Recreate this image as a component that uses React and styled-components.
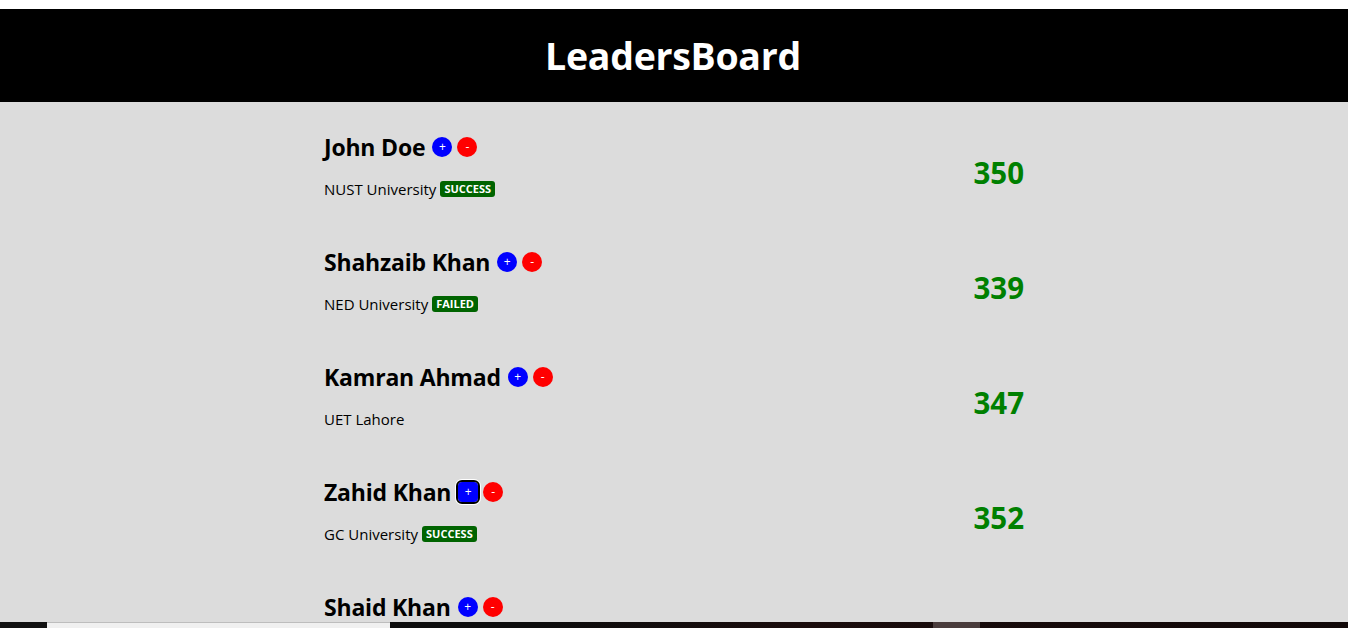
import React from 'react';
import styled, { createGlobalStyle } from 'styled-components';

// leaders data
const leaders = [
  { id: 1, name: 'John Doe', uni: 'NUST University', status: 'SUCCESS', score: 350 },
  { id: 2, name: 'Shahzaib Khan', uni: 'NED University', status: 'FAILED', score: 339 },
  { id: 3, name: 'Kamran Ahmad', uni: 'UET Lahore', status: null, score: 347 },
  { id: 4, name: 'Zahid Khan', uni: 'GC University', status: 'SUCCESS', score: 352, focused: true },
  { id: 5, name: 'Shaid Khan', uni: 'FAST University', status: null, score: 341 },
];

const fontStack = '"Segoe UI", "Open Sans", "Noto Sans", sans-serif';

const GlobalStyle = createGlobalStyle`
  html, body {
    margin: 0;
    padding: 0;
    height: 100%;
    overflow: hidden;
    background: #dcdcdc;
    font-family: ${fontStack};
  }
`;

const Page = styled.div`
  height: 628px;
  display: flex;
  flex-direction: column;
  background: #dcdcdc;
  overflow: hidden;
`;

const TopGap = styled.div`
  height: 9px;
  background: #fff;
  flex-shrink: 0;
`;

const Header = styled.header`
  height: 93px;
  background: #000;
  display: flex;
  align-items: center;
  justify-content: center;
  flex-shrink: 0;

  h1 {
    margin: 0 0 0 -2px;
    color: #fff;
    font-size: 37.5px;
    font-weight: 700;
    letter-spacing: -0.3px;
  }
`;

// the list is cut at the bottom, like a scrolled page
const Viewport = styled.div`
  flex: 1;
  min-height: 0;
  overflow: hidden;
`;

const List = styled.div`
  width: 700px;
  margin: 0 auto;
  padding-top: 28px;
`;

const Row = styled.div`
  display: flex;
  justify-content: space-between;
  align-items: flex-start;
  height: 115px;
`;

const Info = styled.div`
  display: flex;
  flex-direction: column;
`;

const NameLine = styled.div`
  display: flex;
  align-items: center;
  gap: 5px;
  height: 34px;

  h2 {
    margin: 0 2px 0 0;
    font-size: 23px;
    font-weight: 700;
    letter-spacing: -0.2px;
    color: #000;
  }
`;

const RoundBtn = styled.button`
  width: 20px;
  height: 20px;
  border-radius: ${(p) => (p.$focused ? '4px' : '50%')};
  border: none;
  padding: 0;
  background: ${(p) => p.$color};
  color: #fff;
  font-family: ${fontStack};
  font-size: 12px;
  line-height: 20px;
  text-align: center;
  cursor: pointer;
  outline: ${(p) => (p.$focused ? '2px solid #000' : 'none')};
  box-shadow: ${(p) => (p.$focused ? '0 0 0 3px #fff' : 'none')};
`;

const UniLine = styled.div`
  display: flex;
  align-items: center;
  gap: 4px;
  margin-top: 15px;
  font-size: 15px;
  color: #000;
`;

const Badge = styled.span`
  background: #006400;
  color: #fff;
  font-size: 11px;
  font-weight: 700;
  padding: 1px 4px;
  border-radius: 3px;
  line-height: 14px;
`;

const Score = styled.div`
  color: #008000;
  font-size: 29.5px;
  font-weight: 700;
  margin-top: 22px;
`;

const Taskbar = styled.div`
  height: 6px;
  flex-shrink: 0;
  display: flex;
  background: linear-gradient(90deg, #0d0d0d 40%, #1a0c0c 60%, #110808 100%);
`;

const TaskItem = styled.div`
  width: ${(p) => p.$w}px;
  background: ${(p) => p.$bg};
  border-top: ${(p) => (p.$light ? '1px solid #bdbdbd' : 'none')};
  flex-shrink: 0;
`;

function LeaderRow({ leader }) {
  return (
    <Row>
      <Info>
        <NameLine>
          <h2>{leader.name}</h2>
          <RoundBtn $color="#0000ff" $focused={leader.focused}>+</RoundBtn>
          <RoundBtn $color="#ff0000">-</RoundBtn>
        </NameLine>
        <UniLine>
          {leader.uni}
          {leader.status && <Badge>{leader.status}</Badge>}
        </UniLine>
      </Info>
      <Score>{leader.score}</Score>
    </Row>
  );
}

export default function App() {
  return (
    <Page>
      <GlobalStyle />
      <TopGap />
      <Header>
        <h1>LeadersBoard</h1>
      </Header>
      <Viewport>
        <List>
          {leaders.map((l) => (
            <LeaderRow key={l.id} leader={l} />
          ))}
        </List>
      </Viewport>
      <Taskbar>
        <TaskItem $w={47} $bg="#111" />
        <TaskItem $w={343} $bg="#f0f0f0" $light />
        <TaskItem $w={543} $bg="transparent" />
        <TaskItem $w={47} $bg="#4a3c3c" />
      </Taskbar>
    </Page>
  );
}
